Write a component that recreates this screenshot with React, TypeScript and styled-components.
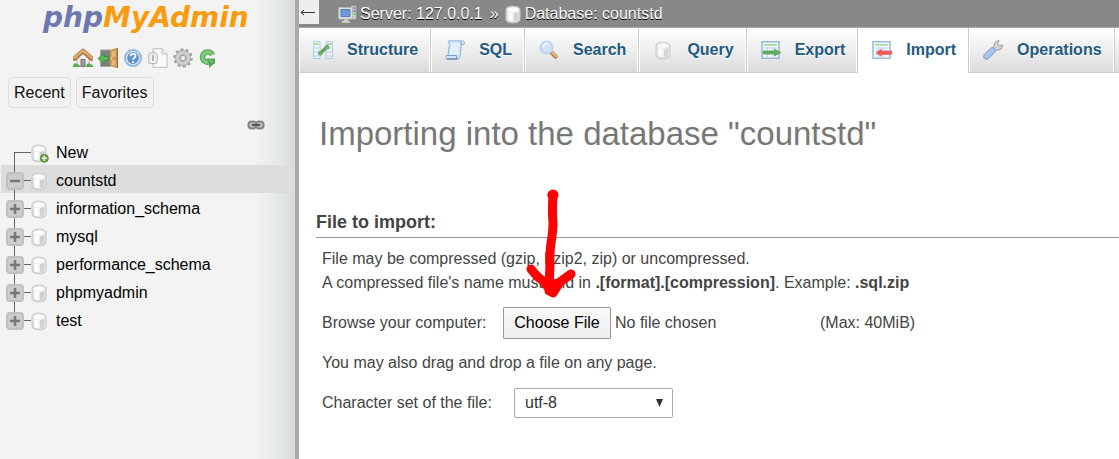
import React from "react";
import styled, { createGlobalStyle, css } from "styled-components";

const GlobalStyle = createGlobalStyle`
  *, *::before, *::after { box-sizing: border-box; }
  body {
    margin: 0;
    background: #fff;
    color: #444;
    font: 16px/24px "Liberation Sans", Arial, sans-serif;
  }
  button, input, select { font: inherit; }
`;

const Page = styled.div`
  display: flex;
  min-height: 100vh;
`;

/* ---------- navigation panel ---------- */

const Sidebar = styled.aside`
  flex: 0 0 299px;
  border-right: 4px solid #aaa;
  background: linear-gradient(to left, #d6dbdc 0, #e2e5e6 12px, #f3f3f3 40px);
`;

const Logo = styled.a`
  display: block;
  padding-left: 43px;
  height: 42px;
  font: italic bold 28px/36px "DejaVu Sans", sans-serif;
  color: #6c78af;
  text-decoration: none;
  span { color: #f89c0e; }
`;

const IconBar = styled.nav`
  display: flex;
  justify-content: center;
  gap: 5px;
  height: 35px;
  padding: 6px 4px 0 0;
`;

const IconLink = styled.a`
  display: block;
  width: 20px;
  height: 20px;
  svg { display: block; }
`;

const QuickLinks = styled.div`
  display: flex;
  gap: 5px;
  padding-left: 8px;
`;

const QuickButton = styled.button`
  height: 31px;
  padding: 0 5px;
  border: 1px solid #ddd;
  border-radius: 5px;
  background: #f2f2f2;
  color: #111;
`;

const LinkToggle = styled.button`
  display: block;
  margin: 8px 30px 3px auto;
  padding: 4px 0;
  border: 0;
  background: none;
  svg { display: block; }
`;

const Tree = styled.ul`
  list-style: none;
  margin: 0;
  padding: 0 0 0 1px;
`;

type Place = "first" | "middle" | "last";

const trunk = {
  first: css`background-size: 1px 13px, 17px 1px; background-position: 13px 15px, 13px 15px;`,
  middle: css`background-size: 1px 28px, 17px 1px; background-position: 13px 0, 13px 15px;`,
  last: css`background-size: 1px 15px, 17px 1px; background-position: 13px 0, 13px 15px;`,
};

const TreeRow = styled.li<{ $place: Place; $active?: boolean }>`
  display: flex;
  align-items: center;
  height: 28px;
  padding: 4px 0 0 5px;
  background-color: ${(p) => (p.$active ? "#ddd" : "transparent")};
  background-image: linear-gradient(#666, #666), linear-gradient(#666, #666);
  background-repeat: no-repeat;
  ${(p) => trunk[p.$place]}
`;

const ToggleSlot = styled.span`
  flex: 0 0 25px;
  height: 18px;
`;

const Toggle = styled.button`
  display: block;
  width: 18px;
  height: 18px;
  padding: 0;
  border: 2px solid #c0c0c0;
  border-radius: 4px;
  background: #ccc;
  svg { display: block; }
`;

const TreeLink = styled.a`
  display: flex;
  align-items: center;
  gap: 7px;
  color: #000;
  text-decoration: none;
`;

/* ---------- main panel ---------- */

const Main = styled.main`
  flex: 1;
  min-width: 0;
  overflow: hidden;
`;

const ServerBar = styled.header`
  display: flex;
  align-items: center;
  height: 28px;
  padding-top: 1px;
  background: #888;
  border-bottom: 1px solid #aaa;
  white-space: nowrap;
`;

const BackButton = styled.button`
  align-self: flex-start;
  width: 20px;
  height: 24px;
  padding: 0;
  margin: -1px 19px 0 0;
  border: 0;
  background: #eee;
  svg { display: block; }
`;

const Crumb = styled.a`
  display: flex;
  align-items: center;
  gap: 2px;
  color: #fff;
  text-decoration: none;
  text-shadow: 0 1px 0 #000;
`;

const Separator = styled.span`
  padding: 0 6px 0 7px;
  color: #fff;
  text-shadow: 0 1px 0 #000;
`;

const Tabs = styled.nav`
  display: flex;
  height: 45px;
  border-bottom: 1px solid #ccc;
  background: linear-gradient(#fff, #dcdcdc);
`;

const Tab = styled.a<{ $active?: boolean }>`
  display: flex;
  flex: none;
  align-items: center;
  gap: 14px;
  height: ${(p) => (p.$active ? "45px" : "44px")};
  padding: 0 12px ${(p) => (p.$active ? "1px" : "0")} 14px;
  border-right: 1px solid #ccc;
  background: ${(p) => (p.$active ? "#fff" : "none")};
  box-shadow: inset -1px 0 0 #fff, inset 1px 0 0 #fff;
  color: #235a81;
  font-weight: bold;
  text-decoration: none;
  text-shadow: 0 1px 0 #fff;
  svg { opacity: 0.85; }
`;

const Title = styled.h1`
  margin: 39px 0 0 20px;
  color: #777;
  font-size: 33px;
  line-height: 44px;
  font-weight: normal;
  white-space: nowrap;
`;

const Form = styled.form`
  margin-left: 17px;
`;

const SectionTitle = styled.h2`
  margin: 52px 0 9px;
  border-bottom: 1px solid #999;
  font-size: 18px;
  line-height: 29px;
`;

const Body = styled.div`
  padding-left: 6px;
`;

const Text = styled.p`
  margin: 0;
`;

const Field = styled.div`
  display: flex;
  align-items: center;
  height: 32px;
  margin: 12px 0;
`;

const Label = styled.label<{ $width: number }>`
  flex: 0 0 ${(p) => p.$width}px;
`;

const FilePicker = styled.div`
  position: relative;
  flex: 0 0 317px;
  height: 32px;
`;

const FileInput = styled.input`
  display: block;
  width: 100%;
  height: 32px;
  color: #444;
  &::file-selector-button {
    width: 108px;
    height: 32px;
    margin: 0 4px 0 0;
    padding: 0;
    border: 1px solid #999;
    border-radius: 1px;
    background: linear-gradient(#f9f9f9, #eee);
    color: #000;
    font: inherit;
  }
`;

const Pointer = styled.svg`
  position: absolute;
  left: 22px;
  bottom: 40px;
  pointer-events: none;
`;

const SelectBox = styled.div`
  display: flex;
  align-items: center;
  width: 159px;
  height: 30px;
  border: 1px solid #aaa;
  border-radius: 2px;
  svg { flex: none; margin: 0 8px 0 -17px; pointer-events: none; }
`;

const Select = styled.select`
  appearance: none;
  width: 100%;
  height: 28px;
  padding: 0 20px 0 10px;
  border: 0;
  background: transparent;
  color: #333;
`;

/* ---------- icons ---------- */

const Icon = ({ size = 20, children }: { size?: number; children: React.ReactNode }) => (
  <svg width={size} height={size} viewBox="0 0 20 20" fill="none" aria-hidden="true">
    {children}
  </svg>
);

const HomeIcon = () => (
  <Icon>
    <path d="M4 10 10 5l6 5v8.500H4z" fill="#efedea" stroke="#bbb" />
    <path d="M8 11.500h4v7H8z" fill="#999" stroke="#777" />
    <path d="M0 17.500q1-3 3.500-2t3.500 2.500v1H0zm13 .5q1-3.500 3.500-2.500t3.500 2v1.500h-7z" fill="#5aa851" />
    <path d="m1.500 10.500 8.500-7.500 8.500 7.500" stroke="#a87540" strokeWidth="4.600" strokeLinecap="round" strokeLinejoin="round" />
    <path d="m1.500 9.800 8.500-7.300 8.500 7.300" stroke="#dcaa6c" strokeWidth="2.600" strokeLinecap="round" strokeLinejoin="round" />
  </Icon>
);
const ExitIcon = () => (
  <Icon>
    <path d="M2.500 2h10v16.500h-10z" fill="#808080" stroke="#a5a5a5" />
    <path d="m12 2 7-2h1v20h-1l-7-2z" fill="#cd9150" />
    <path d="m13.500 3.500 4-1v6.500l-4 .5zm0 8.500 4-.5v6.500l-4-.8z" fill="#e3b67d" />
    <path d="M19.500 0v20" stroke="#a46a33" />
    <circle cx="13.500" cy="10.500" r="1" fill="#f6dc5e" />
    <path d="M0 10.500 6 5v3.500h4.500v4H6V16z" fill="#5cb654" stroke="#35863a" strokeWidth=".8" />
  </Icon>
);
const HelpIcon = () => (
  <Icon>
    <circle cx="10" cy="10" r="8.700" fill="#8fb3df" stroke="#a9c3e4" />
    <circle cx="10" cy="10" r="6.500" fill="#5f91cd" stroke="#e5effa" strokeWidth="1.200" />
    <path d="M7.500 8.200C7.500 5 12.700 5 12.600 8c0 1.800-2.600 1.800-2.600 3.800" stroke="#fff" strokeWidth="1.800" />
    <circle cx="10" cy="14" r="1.100" fill="#fff" />
  </Icon>
);
const DocsIcon = () => (
  <Icon>
    <path d="M5 .7h9L19 6v13.300H5z" fill="#fafafa" stroke="#bdbdbd" />
    <path d="M14 .7V6h5" fill="#eee" stroke="#bdbdbd" />
    <rect x=".7" y="4.700" width="8.500" height="11" rx="2.500" fill="#efefef" stroke="#b0b0b0" />
    <path d="M5 7v6" stroke="#b5b5b5" strokeWidth="2" />
  </Icon>
);
const GearIcon = () => (
  <Icon>
    <circle cx="10" cy="10" r="8.300" stroke="#a0a0a0" strokeWidth="2.800" strokeDasharray="2.600 2.615" />
    <circle cx="10" cy="10" r="5.400" stroke="#a5a5a5" strokeWidth="5" />
    <circle cx="10" cy="10" r="5.400" stroke="#cfcfcf" strokeWidth="3.400" />
    <circle cx="10" cy="10" r="2.600" fill="#f0f0f0" stroke="#a0a0a0" />
  </Icon>
);
const ReloadIcon = () => (
  <Icon>
    <path d="M14.500 7A5.200 5.200 0 1 0 10.500 14.200" stroke="#4ea552" strokeWidth="5.400" />
    <path d="M14.500 7A5.200 5.200 0 1 0 10.500 14.200" stroke="#82c87e" strokeWidth="3.200" />
    <path d="M8.500 10.500H17v4.500l-6 5v-4.500z" fill="#4ea552" />
    <path d="m11.500 11.500 3.500 3" stroke="#82c87e" strokeWidth="1.500" />
  </Icon>
);
const ChainIcon = () => (
  <svg width="18" height="10" viewBox="0 0 18 10" fill="none" aria-hidden="true">
    <rect x="1.500" y="1.500" width="7.500" height="7" rx="3" fill="#bbb" stroke="#858585" strokeWidth="2" />
    <rect x="9" y="1.500" width="7.500" height="7" rx="3" fill="#bbb" stroke="#858585" strokeWidth="2" />
    <path d="M5 5h8" stroke="#555" strokeWidth="2" />
  </svg>
);
const Cylinder = () => (
  <>
    <path d="M1 4.500c0-4.500 14-4.500 14 0v10c0 4.500-14 4.500-14 0z" fill="#d9d9d9" stroke="#c9c9c9" />
    <path d="M2.500 5.500c2 1.800 9 1.800 11 0v9c-2 2.400-9 2.400-11 0z" fill="#f0f0f0" />
    <path d="M4 7.500q1.500.6 3 .6V16q-2 0-3-.7z" fill="#fff" />
    <path d="M9 8.100q2.500-.2 4-1v7.500q-1.500 1.200-4 1.400z" fill="#d0d0d0" />
    <ellipse cx="8" cy="4.600" rx="5.600" ry="2.300" fill="#fff" />
  </>
);
const DbIcon = ({ add }: { add?: boolean }) => (
  <svg width="18" height="19" viewBox="0 0 18 19" fill="none" aria-hidden="true">
    <Cylinder />
    {add && (
      <>
        <circle cx="13.300" cy="14.300" r="4" fill="#6a9f45" stroke="#5b8f3a" />
        <path d="M13.300 11.800v5m-2.500-2.500h5" stroke="#fff" strokeWidth="1.500" />
      </>
    )}
  </svg>
);
const QueryIcon = () => (
  <Icon><g transform="translate(2 1)"><Cylinder /></g></Icon>
);
const ServerIcon = () => (
  <Icon>
    <path d="M12.500 1h6.500v15h-6.500z" fill="#c4c4c4" stroke="#777" />
    <path d="M14 4h4m-4 3h4" stroke="#777" />
    <path d="M16 9h2v2h-2z" fill="#53df45" />
    <path d="M.8 3.500h13.500v11.500H.8z" fill="#e0e0e0" stroke="#bbb" />
    <path d="M3 5.500h9v7H3z" fill="#6b9ad4" stroke="#4f7fbe" />
    <path d="M6 15h4v2H6zm-2 2h8v2H4z" fill="#ccc" />
  </Icon>
);
const StructureIcon = () => (
  <Icon>
    <path d="M.5 1.500h6.500v17H.5zm12.500 0h6.500v17H13z" fill="#eef5fd" stroke="#a9c7ea" />
    <path d="M1 4h5m8 0h5" stroke="#8bd67c" strokeWidth="1.600" />
    <path d="M1 8h5m-5 4h5m-5 4h5m8-8h5m-5 4h5m-5 4h5" stroke="#a9c7ea" />
    <path d="m7 13.500 7-6.500" stroke="#4b9445" strokeWidth="3.500" />
    <circle cx="7.200" cy="13.300" r="2.400" fill="#5ca754" />
    <circle cx="14" cy="7.200" r="2.400" fill="#5ca754" />
  </Icon>
);
const SqlIcon = () => (
  <Icon>
    <path d="M3.500.8h14q3 1 1.500 4l-2.500-.5L15 16q-.5 3-3 3H2q-2-1-.8-3.500H3L4.500 4q-2-1-1-3.200z" fill="#cfe3fa" stroke="#7fa8da" />
    <path d="M6 3h8.500l-1.500 12H4.700z" fill="#e3f0ff" />
    <path d="M1.500 15.500h10q-.3 3 1 3.500M15 1.500q1.500 0 1.500 3" stroke="#5f8fc9" />
    <path d="M1.500 19H12.500" stroke="#42658f" />
  </Icon>
);
const SearchIcon = () => (
  <Icon>
    <path d="m12.500 12.500 4 4" stroke="#a87b4c" strokeWidth="4.500" strokeLinecap="round" />
    <path d="m13.500 12.500 3.500 3.500" stroke="#e3ad69" strokeWidth="2.200" strokeLinecap="round" />
    <circle cx="7.500" cy="7.500" r="6" fill="#cfe2f8" stroke="#b5d0ef" strokeWidth="2" />
    <path d="M4 7q1-4 5-3" stroke="#eff8ff" strokeWidth="2" />
  </Icon>
);
const Sheet = () => (
  <>
    <path d="M1 1.800h17v16.500H1z" fill="#f4f8fd" stroke="#8cafd9" strokeWidth="1.500" />
    <path d="M3 4.800h13" stroke="#8bd67c" strokeWidth="1.600" />
    <path d="M3 8h13M3 11h13M3 14h13M6.500 7v10M12 7v10" stroke="#b5cdea" />
  </>
);
const ExportIcon = () => (
  <Icon>
    <Sheet />
    <path d="M2 11h11.500V9l6.500 3.500-6.500 3.500v-2H2z" fill="#4aa548" stroke="#3b8a3c" strokeWidth=".6" />
  </Icon>
);
const ImportIcon = () => (
  <Icon>
    <Sheet />
    <path d="M20 11H9.500V9L4 12.700l5.500 3.800v-2H20z" fill="#f03c3c" stroke="#e05050" strokeWidth=".6" />
  </Icon>
);
const WrenchIcon = () => (
  <Icon>
    <path d="m9 9 2-2q-.5-5.500 5-6.500L14.500 4l2 2 3.300-1Q19 10.500 13.500 10l-2 2z" fill="#cfcfcf" stroke="#8a8a8a" />
    <path d="m3.500 16.500 6-6" stroke="#7399d3" strokeWidth="6.500" strokeLinecap="round" />
    <path d="m3.500 16.500 6-6" stroke="#9fc0f0" strokeWidth="4.500" strokeLinecap="round" />
  </Icon>
);

/* ---------- data ---------- */

const shortcuts = [
  { label: "Home", icon: HomeIcon },
  { label: "Log out", icon: ExitIcon },
  { label: "phpMyAdmin documentation", icon: HelpIcon },
  { label: "MySQL documentation", icon: DocsIcon },
  { label: "Navigation panel settings", icon: GearIcon },
  { label: "Reload navigation panel", icon: ReloadIcon },
];

const databases = ["countstd", "information_schema", "mysql", "performance_schema", "phpmyadmin", "test"];

const tabs = [
  { label: "Structure", icon: StructureIcon },
  { label: "SQL", icon: SqlIcon },
  { label: "Search", icon: SearchIcon },
  { label: "Query", icon: QueryIcon },
  { label: "Export", icon: ExportIcon },
  { label: "Import", icon: ImportIcon },
  { label: "Operations", icon: WrenchIcon },
];

const current = "countstd";

export default function App() {
  return (
    <Page>
      <GlobalStyle />
      <Sidebar>
        <Logo href="#">php<span>MyAdmin</span></Logo>
        <IconBar>
          {shortcuts.map(({ label, icon: Glyph }) => (
            <IconLink key={label} href="#" aria-label={label}><Glyph /></IconLink>
          ))}
        </IconBar>
        <QuickLinks>
          <QuickButton type="button">Recent</QuickButton>
          <QuickButton type="button">Favorites</QuickButton>
        </QuickLinks>
        <LinkToggle type="button" aria-label="Unlink from main panel"><ChainIcon /></LinkToggle>
        <Tree>
          <TreeRow $place="first">
            <ToggleSlot />
            <TreeLink href="#"><DbIcon add />New</TreeLink>
          </TreeRow>
          {databases.map((name, i) => (
            <TreeRow key={name} $place={i === databases.length - 1 ? "last" : "middle"} $active={name === current}>
              <ToggleSlot>
                <Toggle type="button" aria-label={`Expand or collapse ${name}`}>
                  <svg width="14" height="14" viewBox="0 0 14 14" aria-hidden="true">
                    <path d={name === current ? "M2 7h10" : "M2 7h10M7 2v10"} stroke="#777" strokeWidth="2.500" />
                  </svg>
                </Toggle>
              </ToggleSlot>
              <TreeLink href="#"><DbIcon />{name}</TreeLink>
            </TreeRow>
          ))}
        </Tree>
      </Sidebar>

      <Main>
        <ServerBar>
          <BackButton type="button" aria-label="Hide panel">
            <svg width="20" height="24" viewBox="0 0 20 24" fill="none" aria-hidden="true">
              <path d="M16 12.500H2M5 10l-3 2.500L5 15" stroke="#333" />
            </svg>
          </BackButton>
          <Crumb href="#"><ServerIcon />Server: 127.0.0.1</Crumb>
          <Separator>»</Separator>
          <Crumb href="#"><DbIcon />Database: countstd</Crumb>
        </ServerBar>
        <Tabs>
          {tabs.map(({ label, icon: Glyph }) => (
            <Tab key={label} href="#" $active={label === "Import"}><Glyph />{label}</Tab>
          ))}
        </Tabs>

        <Title>Importing into the database "countstd"</Title>

        <Form>
          <SectionTitle>File to import:</SectionTitle>
          <Body>
            <Text>File may be compressed (gzip, bzip2, zip) or uncompressed.</Text>
            <Text>
              A compressed file's name must end in <b>.[format].[compression]</b>. Example: <b>.sql.zip</b>
            </Text>
            <Field>
              <Label htmlFor="import-file" $width={181}>Browse your computer:</Label>
              <FilePicker>
                <FileInput id="import-file" type="file" />
                <Pointer width="54" height="112" viewBox="0 0 54 112" fill="none" aria-hidden="true">
                  <path
                    d="M27 8 28 8Q27 24 28 36C28 52 24 58 25 76L24 104"
                    stroke="#f00" strokeWidth="9" strokeLinecap="round" strokeLinejoin="round"
                  />
                  <circle cx="28" cy="8" r="5.500" fill="#f00" />
                  <path
                    d="M6 82Q12 90 18 94L28 106 35 95 46 87"
                    stroke="#f00" strokeWidth="9" strokeLinecap="round" strokeLinejoin="round"
                  />
                  <path d="M20 92h14L28 106h-7z" fill="#f00" />
                </Pointer>
              </FilePicker>
              <span>(Max: 40MiB)</span>
            </Field>
            <Text>You may also drag and drop a file on any page.</Text>
            <Field>
              <Label htmlFor="charset" $width={192}>Character set of the file:</Label>
              <SelectBox>
                <Select id="charset" defaultValue="utf-8">
                  <option>utf-8</option>
                </Select>
                <svg width="9" height="8" viewBox="0 0 9 8" aria-hidden="true">
                  <path d="M1 0h7L4.500 8z" fill="#333" />
                </svg>
              </SelectBox>
            </Field>
          </Body>
        </Form>
      </Main>
    </Page>
  );
}
